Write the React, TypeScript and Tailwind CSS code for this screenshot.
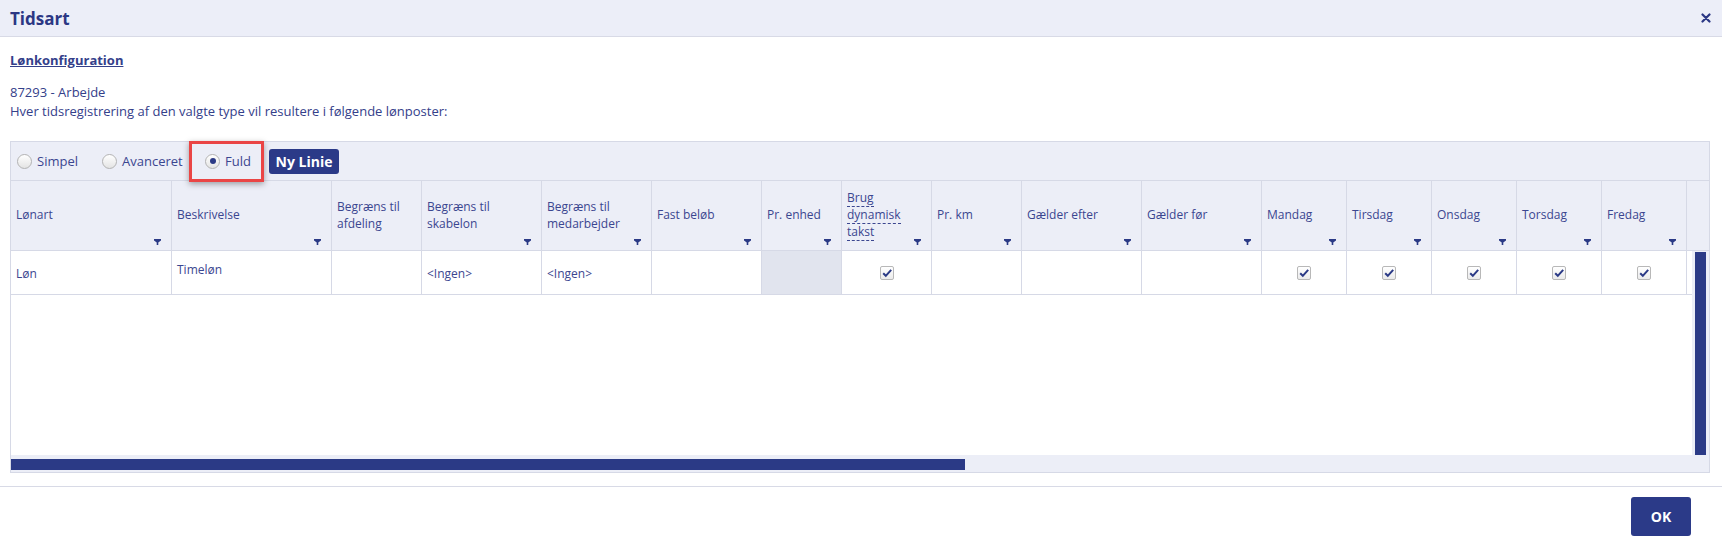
import React from 'react';

type Column = {
  width: string;
  lines: string[];
  filter?: boolean;
  dashed?: boolean;
};

const columns: Column[] = [
  { width: 'w-[161px]', lines: ['Lønart'], filter: true },
  { width: 'w-[160px]', lines: ['Beskrivelse'], filter: true },
  { width: 'w-[90px]', lines: ['Begræns til', 'afdeling'] },
  { width: 'w-[120px]', lines: ['Begræns til', 'skabelon'], filter: true },
  { width: 'w-[110px]', lines: ['Begræns til', 'medarbejder'], filter: true },
  { width: 'w-[110px]', lines: ['Fast beløb'], filter: true },
  { width: 'w-[80px]', lines: ['Pr. enhed'], filter: true },
  { width: 'w-[90px]', lines: ['Brug', 'dynamisk', 'takst'], filter: true, dashed: true },
  { width: 'w-[90px]', lines: ['Pr. km'], filter: true },
  { width: 'w-[120px]', lines: ['Gælder efter'], filter: true },
  { width: 'w-[120px]', lines: ['Gælder før'], filter: true },
  { width: 'w-[85px]', lines: ['Mandag'], filter: true },
  { width: 'w-[85px]', lines: ['Tirsdag'], filter: true },
  { width: 'w-[85px]', lines: ['Onsdag'], filter: true },
  { width: 'w-[85px]', lines: ['Torsdag'], filter: true },
  { width: 'w-[85px]', lines: ['Fredag'], filter: true },
  // next column is scrolled out of view, only its edge shows
  { width: 'w-[85px]', lines: [] },
];

type Cell = { kind: 'text'; value: string; top: string } | { kind: 'empty' } | { kind: 'grey' } | { kind: 'check' };

const row: Cell[] = [
  { kind: 'text', value: 'Løn', top: 'pt-[14px]' },
  { kind: 'text', value: 'Timeløn', top: 'pt-[10px]' },
  { kind: 'empty' },
  { kind: 'text', value: '<Ingen>', top: 'pt-[14px]' },
  { kind: 'text', value: '<Ingen>', top: 'pt-[14px]' },
  { kind: 'empty' },
  { kind: 'grey' },
  { kind: 'check' },
  { kind: 'empty' },
  { kind: 'empty' },
  { kind: 'empty' },
  { kind: 'check' },
  { kind: 'check' },
  { kind: 'check' },
  { kind: 'check' },
  { kind: 'check' },
  { kind: 'empty' },
];

function FilterIcon() {
  return (
    <svg viewBox="0 0 7 6" className="h-[6px] w-[7px]">
      <path d="M0 0H7V1.4L4.3 3.4V6H2.7V3.4L0 1.4Z" fill="#2b3a86" />
    </svg>
  );
}

function Checkbox() {
  return (
    <span className="flex h-[14px] w-[14px] items-center justify-center rounded-[2px] border border-[#b8b8b8] bg-linear-to-b from-white to-[#ebebeb]">
      <svg viewBox="0 0 12 12" className="h-[12px] w-[12px]">
        <path d="M2.2 6.3 4.8 8.8 10.2 2.8" fill="none" stroke="#2b3a86" strokeWidth="2" />
      </svg>
    </span>
  );
}

function Radio({ label, checked, width }: { label: string; checked?: boolean; width: string }) {
  return (
    <div className={`flex shrink-0 items-center gap-[5px] ${width}`}>
      <span className="flex h-[15px] w-[15px] items-center justify-center rounded-full border border-[#b3b3b3] bg-linear-to-b from-white to-[#e4e4e4]">
        {checked && <span className="h-[6px] w-[6px] rounded-full bg-[#2b3a86]" />}
      </span>
      <span className="text-[13px] leading-[19px] text-[#3b4690]">{label}</span>
    </div>
  );
}

export default function App() {
  return (
    <div className="h-[541px] w-[1722px] overflow-hidden bg-white font-['Open_Sans',sans-serif] text-[#34408a]">
      <div className="flex h-[37px] items-center justify-between border-b border-[#d8dae6] bg-[#eceef8] pl-[10px] pr-[11px]">
        <h1 className="text-[17px] font-bold leading-none text-[#2b3784]">Tidsart</h1>
        <svg viewBox="0 0 10 10" className="h-[10px] w-[10px]">
          <path d="M1.5 1.5 8.5 8.5M8.5 1.5 1.5 8.5" stroke="#2b3784" strokeWidth="2.2" strokeLinecap="round" />
        </svg>
      </div>

      <div className="px-[10px] pt-[14px]">
        <p className="text-[13px] font-bold leading-[19px] underline">Lønkonfiguration</p>
        <p className="mt-[13px] text-[13px] leading-[19px]">87293 - Arbejde</p>
        <p className="text-[13px] leading-[19px]">
          Hver tidsregistrering af den valgte type vil resultere i følgende lønposter:
        </p>

        <div className="mt-[20px] w-[1700px] border border-[#d6d9e6] bg-[#eceef7]">
          <div className="relative flex h-[39px] items-center border-b border-[#d6d9e6] pl-[6px]">
            <Radio label="Simpel" width="w-[85px]" />
            <Radio label="Avanceret" width="w-[103px]" />
            <Radio label="Fuld" checked width="w-[64px]" />
            <button
              type="button"
              className="flex h-[25px] w-[70px] items-center justify-center rounded-[3px] bg-[#2b3a88] text-[14px] font-bold text-white"
            >
              Ny Linie
            </button>
            <div className="pointer-events-none absolute left-[178px] top-[-1px] z-10 h-[41px] w-[75px] border-[3px] border-[#ea4545] shadow-[0_2px_6px_rgba(0,0,0,0.35)]" />
          </div>

          <div className="flex h-[70px] border-b border-[#d6d9e6]">
            <div className="flex w-[1681px] overflow-hidden">
              {columns.map((col, i) => (
                <div
                  key={i}
                  className={`relative flex h-full shrink-0 items-center border-r border-[#d6d9e6] pl-[5px] pr-[16px] text-[12px] leading-[16.7px] text-[#3b4690] ${col.width}`}
                >
                  <div>
                    {col.lines.map((line) => (
                      <div key={line}>
                        {col.dashed ? (
                          <span className="border-b border-dashed border-[#3b4690]">{line}</span>
                        ) : (
                          line
                        )}
                      </div>
                    ))}
                  </div>
                  {col.filter && (
                    <span className="absolute bottom-[5px] right-[10px] flex">
                      <FilterIcon />
                    </span>
                  )}
                </div>
              ))}
            </div>
            <div className="w-[17px]" />
          </div>

          <div className="flex h-[204px]">
            <div className="w-[1681px] overflow-hidden bg-white">
              <div className="flex h-[44px] border-b border-[#d6d9e6]">
                {row.map((cell, i) => {
                  const base = `h-full shrink-0 border-r border-[#d6d9e6] ${columns[i].width}`;
                  if (cell.kind === 'text') {
                    return (
                      <div key={i} className={`${base} pl-[5px] text-[12px] leading-[17px] text-[#3b4690] ${cell.top}`}>
                        {cell.value}
                      </div>
                    );
                  }
                  if (cell.kind === 'grey') {
                    return <div key={i} className={`${base} bg-[#e1e4ee]`} />;
                  }
                  if (cell.kind === 'check') {
                    return (
                      <div key={i} className={`${base} flex items-center justify-center pt-[1px]`}>
                        <Checkbox />
                      </div>
                    );
                  }
                  return <div key={i} className={base} />;
                })}
              </div>
            </div>
            <div className="w-[17px] pl-[3px] pt-[1px]">
              <div className="h-full w-[11px] bg-[#2b3a86]" />
            </div>
          </div>

          <div className="h-[17px] pt-[4px]">
            <div className="h-[11px] w-[954px] bg-[#2b3a86]" />
          </div>
        </div>
      </div>

      <div className="mt-[13px] flex justify-end border-t border-[#d8dae6] pr-[31px] pt-[10px]">
        <button
          type="button"
          className="flex h-[39px] w-[60px] items-center justify-center rounded-[3px] bg-[#2b3a88] text-[14px] font-bold text-white"
        >
          OK
        </button>
      </div>
    </div>
  );
}
